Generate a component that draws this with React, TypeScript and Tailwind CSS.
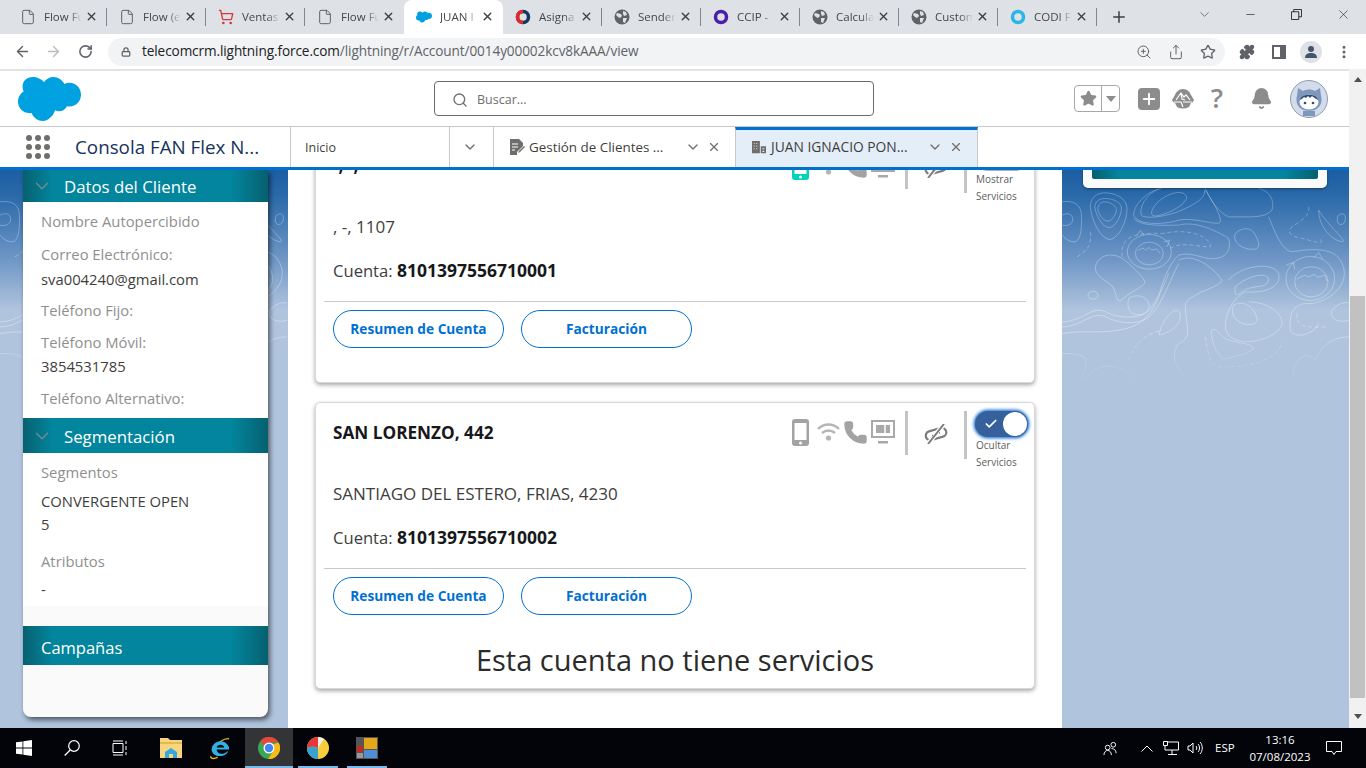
import { ArrowLeft, ArrowRight, RotateCw, Lock, ZoomIn, Share, Star, Puzzle, MoreVertical, X, Plus, ChevronDown, Search, Minus, Check, Phone, Bell, File, ShoppingCart } from "lucide-react";

const sans = "font-['Open_Sans','Liberation_Sans',sans-serif]";

function Globe2() {
  return (
    <svg viewBox="0 0 16 16" className="w-4 h-4">
      <circle cx="8" cy="8" r="7.500" fill="#5f6368" />
      <path d="M3 4l4 1 1 2-2 2-2-1-2-2zM9 2l3 1 1 3-3 1-1-2zM9 9l4 0-2 5-2-1z" fill="#dee1e6" />
    </svg>
  );
}

function Ring({ color, inner }: { color: string; inner?: string }) {
  return (
    <svg viewBox="0 0 16 16" className="w-4 h-4">
      <circle cx="8" cy="8" r="5.500" fill="none" stroke={color} strokeWidth="3.500" />
      {inner && <path d="M8 13.500A5.500 5.500 0 0 1 8 2.500" fill="none" stroke={inner} strokeWidth="3.500" />}
    </svg>
  );
}

function Cloud({ className }: { className: string }) {
  return (
    <svg viewBox="0 0 63 44" className={className}>
      <path
        fill="#00a1e0"
        d="M26 5.200C28.100 2 31.600 0 35.500 0c4.700 0 8.800 2.900 10.900 6.900C47.900 6.100 49.700 5.700 51.500 5.700 58 5.700 63 11 63 17.600S58 29.500 51.500 29.500c-.9 0-1.700-.1-2.500-.3-1.500 3-4.500 5-8 5-1.400 0-2.700-.3-3.900-.9C35.600 38 30.900 44 24.900 44c-5.100 0-9.500-3.400-11.300-8-.7.2-1.500.2-2.300.2C5 36.200 0 31 0 24.600c0-4.300 2.300-8 5.600-10C4.900 13 4.500 11.200 4.500 9.300 4.500 4.200 9 0 14.500 0 18.800 0 23.700 2 26 5.200z"
      />
    </svg>
  );
}

type TabInfo = { title: string; icon: React.ReactNode; active?: boolean };

const docIcon = <File className="w-4 h-4 text-[#5f6368]" strokeWidth={1.500} />;

const browserTabs: TabInfo[] = [
  { title: "Flow Fu", icon: docIcon },
  { title: "Flow (e", icon: docIcon },
  { title: "Ventas", icon: <ShoppingCart className="w-4 h-4 text-[#d8383a]" strokeWidth={2} /> },
  { title: "Flow Fu", icon: docIcon },
  { title: "JUAN I", icon: <Cloud className="w-4 h-3" />, active: true },
  { title: "Asigna", icon: <Ring color="#12395f" inner="#e8262a" /> },
  { title: "Sender", icon: <Globe2 /> },
  { title: "CCIP -", icon: <Ring color="#4b1fa8" /> },
  { title: "Calcula", icon: <Globe2 /> },
  { title: "Custom", icon: <Globe2 /> },
  { title: "CODI F", icon: <Ring color="#29b6e6" /> },
];

function BrowserChrome() {
  return (
    <div className={`${sans} shrink-0`}>
      <div className="h-[34px] bg-[#dee1e6] flex items-end pl-2">
        {browserTabs.map((t, i) => (
          <div
            key={i}
            className={`relative w-[99px] h-[34px] flex items-center pl-[12px] pb-[1px] ${t.active ? "bg-white rounded-t-lg" : ""}`}
          >
            <span className="w-4 flex justify-center shrink-0">{t.icon}</span>
            <span className="ml-[8px] w-[38px] text-[11.500px] text-[#45474a] whitespace-nowrap overflow-hidden [mask-image:linear-gradient(90deg,#000_65%,transparent)]">{t.title}</span>
            <X className="ml-[3px] w-[13px] h-[13px] text-[#3c4043] shrink-0" strokeWidth={2.500} />
            {!t.active && i !== 3 && <span className="absolute right-0 top-[8px] h-[18px] w-px bg-[#80868b]" />}
          </div>
        ))}
        <Plus className="ml-[13px] mb-[8px] w-[18px] h-[18px] text-[#3c4043]" strokeWidth={2} />
        <div className="ml-auto flex items-center h-full pb-[6px]">
          <ChevronDown className="w-[15px] h-[15px] text-[#3c4043] mr-[32px]" strokeWidth={1} />
          <Minus className="w-[13px] h-[13px] text-[#202124] mr-[34px]" strokeWidth={1.200} />
          <svg viewBox="0 0 12 12" className="w-[11px] h-[11px] mr-[34px]" fill="none" stroke="#202124">
            <path d="M.5 3h8v8.500h-8zM3 3V.5h8.500v8H8.500" />
          </svg>
          <X className="w-[15px] h-[15px] text-[#202124] mr-[15px]" strokeWidth={1} />
        </div>
      </div>
      <div className="h-[35px] bg-white flex items-center">
        <ArrowLeft className="ml-[14px] w-[17px] h-[17px] text-[#5f6368]" strokeWidth={2} />
        <ArrowRight className="ml-[14px] w-[17px] h-[17px] text-[#babcbe]" strokeWidth={2} />
        <RotateCw className="ml-[16px] w-[15px] h-[15px] text-[#5f6368]" strokeWidth={2.500} />
        <div className="ml-[15px] w-[1117px] h-[28px] rounded-full bg-[#f1f3f4] flex items-center pl-[13px]">
          <Lock className="w-[10px] h-[12px] text-[#5f6368]" strokeWidth={3} />
          <span className="ml-[11px] text-[13.600px] text-[#202124] tracking-[-0.1px]">telecomcrm.lightning.force.com<span className="text-[#5f6368]">/lightning/r/Account/0014y00002kcv8kAAA/view</span></span>
          <ZoomIn className="ml-auto w-4 h-4 text-[#5f6368]" strokeWidth={1.500} />
          <Share className="ml-[16px] w-4 h-4 text-[#5f6368]" strokeWidth={1.500} />
          <Star className="ml-[16px] mr-[9px] w-4 h-4 text-[#5f6368]" strokeWidth={2} />
        </div>
        <Puzzle className="ml-[14px] w-4 h-4 text-[#5f6368] fill-[#5f6368]" />
        <svg viewBox="0 0 14 14" className="ml-[17px] w-[14px] h-[14px]"><path d="M0 0h14v14H0zM2 2v10h6V2z" fill="#5f6368" fillRule="evenodd" /></svg>
        <span className="ml-[14px] w-[22px] h-[22px] rounded-full bg-[#dee1e6] flex items-center justify-center">
          <svg viewBox="0 0 14 14" className="w-[14px] h-[14px]"><circle cx="7" cy="4" r="3" fill="#44546a" /><path d="M1 13c0-4 3-5 6-5s6 1 6 5z" fill="#44546a" /></svg>
        </span>
        <MoreVertical className="ml-[14px] w-4 h-4 text-[#5f6368]" strokeWidth={2.500} />
      </div>
    </div>
  );
}

function SfHeader() {
  return (
    <div className="h-[58px] bg-white border-t-2 border-[#e3e3e3] border-b border-b-[#c9c9c9] flex items-center pl-[18px] relative">
      <Cloud className="w-[63px] h-[44px] shrink-0" />
      <div className="ml-[353px] w-[440px] h-[35px] border border-[#6b6b6b] rounded-[4px] flex items-center pl-[17px] pt-[3px] shrink-0">
        <Search className="w-[16px] h-[16px] text-[#706e6b]" strokeWidth={2} />
        <span className="ml-[9px] text-[12.500px] text-[#706e6b]">Buscar...</span>
      </div>
      <div className="ml-[200px] flex items-center w-[46px] h-[27px] border border-[#a8a8a8] rounded-[4px] shrink-0">
        <span className="w-[27px] h-full flex items-center justify-center border-r border-[#a8a8a8]">
          <Star className="w-[17px] h-[17px] text-[#8c8c8c] fill-[#8c8c8c]" />
        </span>
        <span className="flex-1 flex justify-center"><span className="w-0 h-0 border-x-[5px] border-x-transparent border-t-[6px] border-t-[#8c8c8c]" /></span>
      </div>
      <span className="ml-[18px] w-[22px] h-[22px] rounded-[4px] bg-[#8c8c8c] flex items-center justify-center shrink-0">
        <Plus className="w-[18px] h-[18px] text-white" strokeWidth={2.500} />
      </span>
      <svg viewBox="0 0 22 20" className="ml-[12px] w-[22px] h-[20px] shrink-0">
        <path d="M11 0c4 0 7 3 8 6l3 5c-1 2-2 3-3 3l-2 4c-4 2-8 2-12 0l-2-4c-1 0-2-1-3-3l3-5c1-3 4-6 8-6z" fill="#8c8c8c" />
        <path d="M4 11l5-7 3 4 2-2 4 5M9 4l1 6 3 1M2 13h7l2 5M11 13l9 0" fill="none" stroke="#fff" strokeWidth="1.200" />
      </svg>
      <span className="ml-[15px] -mt-[2px] w-[16px] text-center text-[27px] leading-none font-semibold text-[#8c8c8c] shrink-0">?</span>
      <Bell className="ml-[25px] w-[23px] h-[23px] text-[#8c8c8c] fill-[#8c8c8c] shrink-0" />
      <svg viewBox="0 0 38 38" className="ml-[17px] w-[38px] h-[38px] shrink-0">
        <circle cx="19" cy="19" r="18.500" fill="#d3dcea" stroke="#8f9bb0" />
        <path d="M8 8l5 3c3-2 9-2 12 0l5-3 1 8c2 6-1 15-12 15S5 22 7 16z" fill="#7f97bd" />
        <ellipse cx="19" cy="22" rx="9.500" ry="7.500" fill="#fff" />
        <path d="M10 20c1-7 17-7 18 0-3-2-5-3-6-4l-2 2-2-2-2 2-2-1c-1 1-2 2-4 3z" fill="#2f4a7c" />
        <circle cx="15" cy="23" r="1.300" fill="#2f4a7c" /><circle cx="23" cy="23" r="1.300" fill="#2f4a7c" />
        <path d="M13 31h12v5H13z" fill="#7f97bd" />
      </svg>
    </div>
  );
}

function SfNav() {
  return (
    <div className="h-[40px] bg-white flex items-stretch text-[#3e3e3c]">
      <div className="w-[290px] flex items-center pl-[26px] shrink-0">
        <div className="grid grid-cols-3 gap-[3px]">
          {Array.from({ length: 9 }).map((_, i) => (
            <span key={i} className="w-[6px] h-[6px] rounded-full bg-[#706e6b]" />
          ))}
        </div>
        <span className="ml-[25px] text-[18.800px] text-[#16325c] whitespace-nowrap">Consola FAN Flex N...</span>
      </div>
      <div className="w-[159px] border-l border-[#c9c9c9] flex items-center pl-[14px] pt-[2px] text-[12.500px] text-[#3e3e3c] shrink-0">Inicio</div>
      <div className="w-[44px] border-l border-[#c9c9c9] flex items-center justify-center pr-[3px] shrink-0">
        <ChevronDown className="w-[16px] h-[16px] text-[#706e6b]" strokeWidth={2} />
      </div>
      <div className="w-[242px] border-l border-[#c9c9c9] flex items-center pl-[15px] shrink-0">
        <svg viewBox="0 0 16 16" className="w-[16px] h-[16px] shrink-0">
          <path d="M1 0h9l4 4v3L8 13v3H1z" fill="#706e6b" />
          <path d="M3 5h6M3 8h6M3 11h3" stroke="#fff" strokeWidth="1.200" />
          <path d="M10 12l5-5 1 1-5 5-2 1z" fill="#706e6b" />
        </svg>
        <span className="ml-[4px] w-[150px] text-[13.400px] whitespace-nowrap">Gestión de Clientes ...</span>
        <ChevronDown className="ml-[6px] w-[16px] h-[16px] text-[#706e6b]" strokeWidth={2} />
        <X className="ml-[6px] w-[14px] h-[14px] text-[#706e6b]" strokeWidth={2} />
      </div>
      <div className="w-[243px] bg-[#e4eef8] border-t-[3px] border-t-[#0070d2] border-x border-x-[#c9c9c9] flex items-center pl-[15px] pb-[3px] shrink-0">
        <svg viewBox="0 0 16 16" className="w-[16px] h-[14px] shrink-0">
          <path d="M0 1h9v14H0zM10 7h6v8h-6z" fill="#706e6b" />
          <path d="M2 4h1M5 4h1M2 7h1M5 7h1M2 10h1M5 10h1M12 10h2M12 13h2" stroke="#e4eef8" strokeWidth="1.300" />
        </svg>
        <span className="ml-[4px] w-[151px] text-[13.800px] whitespace-nowrap">JUAN IGNACIO PON...</span>
        <ChevronDown className="ml-[5px] w-[16px] h-[16px] text-[#706e6b]" strokeWidth={2} />
        <X className="ml-[6px] w-[14px] h-[14px] text-[#706e6b]" strokeWidth={2} />
      </div>
    </div>
  );
}

function SectionHeader({ title, height, chevron = true }: { title: string; height: string; chevron?: boolean }) {
  return (
    <div className={`${height} shrink-0 flex items-center bg-[linear-gradient(90deg,#06606f_0%,#03859d_12%,#03859d_85%,#06606f_100%)] text-white`}>
      {chevron ? (
        <>
          <ChevronDown className="ml-[8px] w-[22px] h-[22px] text-[#6f8c93]" strokeWidth={1.500} />
          <span className="ml-[11px] pt-[2px] text-[16.800px]">{title}</span>
        </>
      ) : (
        <span className="ml-[18px] pt-[5px] text-[16.500px]">{title}</span>
      )}
    </div>
  );
}

function Label({ children, className }: { children: React.ReactNode; className: string }) {
  return <div className={`text-[14.800px] leading-[20px] text-[#8f8f8f] ${className}`}>{children}</div>;
}

function Value({ children, className }: { children: React.ReactNode; className: string }) {
  return <div className={`text-[14.800px] leading-[20px] text-[#3e3e3c] ${className}`}>{children}</div>;
}

function Sidebar() {
  return (
    <div className="relative w-[245px] h-[547px] bg-[#fafafa] rounded-b-lg shadow-[2px_3px_5px_rgba(0,0,0,0.55)] flex flex-col overflow-hidden">
      <SectionHeader title="Datos del Cliente" height="h-[32px]" />
      <div className="bg-white h-[216px] pl-[18px] pt-[9px]">
        <Label className="">Nombre Autopercibido</Label>
        <Label className="mt-[13px]">Correo Electrónico:</Label>
        <Value className="mt-[5px]">sva004240@gmail.com</Value>
        <Label className="mt-[11px]">Teléfono Fijo:</Label>
        <Label className="mt-[12px]">Teléfono Móvil:</Label>
        <Value className="mt-[4px]">3854531785</Value>
        <Label className="mt-[12px]">Teléfono Alternativo:</Label>
      </div>
      <SectionHeader title="Segmentación" height="h-[35px]" />
      <div className="bg-white h-[153px] pl-[18px] pt-[9px]">
        <Label className="">Segmentos</Label>
        <Value className="mt-[9px]">CONVERGENTE OPEN</Value>
        <Value className="mt-[3px]">5</Value>
        <Label className="mt-[17px]">Atributos</Label>
        <Value className="mt-[8px]">-</Value>
      </div>
      <div className="h-[20px] shrink-0" />
      <SectionHeader title="Campañas" height="h-[39px]" chevron={false} />
    </div>
  );
}

function LinkOff() {
  return (
    <svg viewBox="0 0 24 20" className="w-[24px] h-[20px]" fill="none">
      <rect x="1.500" y="5.500" width="21" height="9" rx="4.500" stroke="#7c7c7c" strokeWidth="2.200" transform="rotate(-16 12 10)" />
      <path d="M4 20L20 0" stroke="#fff" strokeWidth="4.500" />
      <path d="M4 20L20 0" stroke="#7c7c7c" strokeWidth="2" />
      <path d="M8 11.500l1 0M15 9l1 0" stroke="#7c7c7c" strokeWidth="1.500" />
    </svg>
  );
}

function CardIcons({ on }: { on: boolean }) {
  return (
    <div className="absolute right-[6px] top-[8px] flex items-start">
      <svg viewBox="0 0 17 27" className="mt-[8px] w-[17px] h-[27px]">
        <path d="M3 0h11a3 3 0 0 1 3 3v21a3 3 0 0 1-3 3H3a3 3 0 0 1-3-3V3a3 3 0 0 1 3-3zM2.500 4v17h12V4z" fill={on ? "#a3a3a3" : "#00d2be"} fillRule="evenodd" />
        <circle cx="8.500" cy="24" r="1.500" fill="#fff" />
      </svg>
      <svg viewBox="0 0 23 19" className="ml-[8px] mt-[11px] w-[23px] h-[19px]" fill="none" stroke="#b5b5b5" strokeWidth="2.400">
        <path d="M1 7c6-6 15-6 21 0M5 11c4-3 9-3 13 0" />
        <circle cx="11.500" cy="16" r="2.600" fill="#b5b5b5" stroke="none" />
      </svg>
      <Phone className="ml-[3px] mt-[9px] w-[25px] h-[25px] text-[#a3a3a3] fill-[#a3a3a3]" strokeWidth={1.500} />
      <svg viewBox="0 0 24 24" className="ml-[3px] mt-[9px] w-[24px] h-[24px]">
        <path d="M1 1h22v16H1z" fill="none" stroke="#a9a9a9" strokeWidth="2" />
        <path d="M5 5h14v8H5zM7 21h10v2.500H7z" fill="#a9a9a9" />
        <path d="M14 5v8" stroke="#fff" strokeWidth="1.500" />
      </svg>
      <span className="ml-[10px] w-[3px] h-[44px] bg-[#c4c4c4]" />
      <span className="ml-[16px] mt-[13px] flex"><LinkOff /></span>
      <span className="ml-[16px] w-[3px] h-[48px] bg-[#c4c4c4]" />
      <div className="ml-[8px] w-[53px] flex flex-col">
        <div className={`w-[53px] h-[26px] rounded-full flex items-center justify-between pr-[1px] ${on ? "bg-[#35609c] shadow-[0_0_3px_1.500px_#2f7fd6]" : "bg-[#b0b0b0]"}`}>
          <Check className="ml-[9px] w-[14px] h-[14px] text-white" strokeWidth={3} />
          <span className="w-[24px] h-[24px] rounded-full bg-white" />
        </div>
        <span className="ml-[1px] text-[10px] leading-[17px] text-[#5c5c5c]">{on ? "Ocultar" : "Mostrar"}<br />Servicios</span>
      </div>
    </div>
  );
}

function AccountCard({ title, address, account, on, className, titleTop, children }: { title: string; address: string; account: string; on: boolean; className: string; titleTop: string; children?: React.ReactNode }) {
  return (
    <div className={`relative w-[720px] bg-white border border-[#d8d8d8] rounded-[5px] shadow-[0_2px_4px_rgba(0,0,0,0.35)] shrink-0 ${className}`}>
      <CardIcons on={on} />
      <div className={`pl-[17px] ${titleTop} text-[17.200px] leading-[24px] font-bold text-[#16181a]`}>{title}</div>
      <div className="pl-[17px] mt-[38px] text-[17px] leading-[22px] text-[#3e3e3c]">{address}</div>
      <div className="pl-[17px] mt-[21px] text-[16.600px] leading-[22px] text-[#3e3e3c]">Cuenta: <span className="text-[17.500px] font-bold text-[#16181a]">{account}</span></div>
      <div className="mx-[8px] mt-[19px] border-t border-[#c9c9c9]" />
      <div className="pl-[17px] mt-[8px] flex gap-[17px]">
        <button className="w-[171px] h-[38px] rounded-full border border-[#0070d2] text-[#0070d2] text-[13.700px] font-bold">Resumen de Cuenta</button>
        <button className="w-[171px] h-[38px] rounded-full border border-[#0070d2] text-[#0070d2] text-[13.700px] font-bold">Facturación</button>
      </div>
      {children}
    </div>
  );
}

const contourLines = [
  "M130 68C100 68 85 85 85 110C90 160 120 208 145 208C175 200 195 150 195 115C195 85 160 68 130 68z",
  "M130 85C105 85 95 100 100 120C110 155 130 175 145 172C165 165 180 130 178 110C175 95 150 85 130 85z",
  "M128 95c-15 0-22 12-20 25c5 20 22 38 35 32c12-8 22-25 20-35c-2-12-20-22-35-22z",
  "M0 95C30 90 55 100 58 130C60 170 58 215 35 215C15 215 0 195 0 195",
  "M0 135c15-8 32-5 32 12c0 15-15 22-32 18",
  "M340 68c-30 5-70 35-72 62c5 10 15 8 30 4c30-8 70-30 76-50c0-15-20-20-34-16z",
  "M300 55C260 60 215 100 215 135C225 165 300 165 350 150C400 140 470 170 475 155C480 140 450 90 430 60",
  "M290 57C255 70 230 110 238 135C250 148 320 140 370 115C400 100 430 85 428 60",
  "M430 55C450 100 475 130 500 140C560 140 610 145 630 120C640 90 620 60 590 55",
  "M215 145C240 170 300 165 350 165C400 150 470 185 500 205C510 240 490 270 440 265C410 260 380 245 350 255C320 280 300 340 290 380C270 430 240 470 170 480C110 490 60 480 0 490",
  "M350 270C400 245 460 300 480 330C470 355 400 360 370 400C370 470 395 500 350 520C330 550 330 580 370 620",
  "M520 190c20-20 50-20 60 5c15 25 15 45-10 42c-30 0-60-20-50-47z",
  "M620 140C640 190 660 240 690 245C750 235 820 230 840 280C870 340 800 400 740 400C700 400 680 420 685 480C700 510 760 490 770 460",
  "M100 290c10-40 60-50 100-10c30 30 50 45 48 60c-15 15-50 30-70 50c-15 10-15-20-25-40c-20-20-55-30-53-60z",
  "M500 330c30-40 130-60 150-20c10 40-40 60-100 55c-40 20-60 70-60 100c0 80 150 50 170 0c5-40-50-70-100-70",
  "M520 350c30-30 100-50 100-20c-10 30-50 10-80 35c-15 15-25 10-20-15z",
  "M515 405c25-15 60 0 70 40c5 25-50 25-70-5c-5-15-5-25 0-35z",
  "M0 470C60 470 90 420 130 440C170 460 240 470 270 430C300 400 320 340 350 280",
  "M0 455C60 455 90 405 130 425C170 445 240 450 265 415C285 390 300 360 320 310",
  "M450 480c-10 20 20 90 40 85c30-5 70-15 85-30c-10-20-60-15-85-30c-15-10-30-35-40-25z",
  "M200 385c20-15 60-10 62 25c-5 30-50 30-60 10c-5-10-5-25-2-35z",
  "M292 495c0-30 40-90 60-70c10 20-5 55-60 70z",
  "M690 620C700 560 730 540 760 570C780 520 820 500 861 500",
  "M0 550c20 0 70 0 72 20c0 30-10 60-30 60M60 640C100 570 170 570 230 640",
  "M770 120C800 170 860 215 840 215C810 210 770 170 770 120z",
  "M830 135c15-10 25 0 18 20c-5 12-20 10-22-2c0-8 0-14 4-18z",
  "M78 375a15 12 0 1 0 30 0a15 12 0 1 0-30 0z",
  "M810 420c20-25 50-25 51-20M810 420c-10 25 20 40 51 30",
];

const contourDashes = [
  "M180 260C175 210 200 185 300 190C400 170 450 210 445 230C400 230 350 210 320 240",
  "M740 110C750 160 640 170 700 200C750 210 790 230 775 205",
  "M200 570C220 510 260 490 300 480M430 500C440 570 450 600 500 590C560 590 650 570 660 515",
  "M45 260C80 240 90 220 85 180M705 430C700 480 750 470 800 470",
];

// decorative topographic lines of the page background, drawn from the crop at 3x
function Contours({ id }: { id: string }) {
  return (
    <svg viewBox="0 0 861 650" className="absolute left-0 top-0 w-[287px] h-[217px]" fill="none" strokeWidth="2.500">
      <defs>
        <linearGradient id={id} gradientUnits="userSpaceOnUse" x1="0" y1="0" x2="0" y2="650">
          <stop offset="0" stopColor="#fff" stopOpacity="0.3" />
          <stop offset="0.75" stopColor="#fff" stopOpacity="0.4" />
          <stop offset="1" stopColor="#fff" stopOpacity="0" />
        </linearGradient>
      </defs>
      <g stroke={`url(#${id})`}>
        {contourLines.map((d, i) => (
          <path key={i} d={d} />
        ))}
        {contourDashes.map((d, i) => (
          <path key={i} d={d} strokeDasharray="12 8" />
        ))}
        <ellipse cx="262" cy="245" rx="66" ry="52" />
        <ellipse cx="262" cy="250" rx="42" ry="34" />
        <path d="M228 240l15-6 8 6 10-8 8 8 15-4 10 14M225 195l10-14 12 14M305 215l18-5-8 20" />
        <ellipse cx="745" cy="325" rx="73" ry="66" />
        <ellipse cx="748" cy="335" rx="50" ry="45" />
        <path d="M705 325l25-10 8 6 18-8 12 8 20-6 8 18M672 285l22-8 4 20M755 262l15-14 12 18" />
      </g>
    </svg>
  );
}

function Workspace() {
  return (
    <div className="relative flex-1 min-h-0 border-t-[3px] border-[#0070d2] overflow-hidden bg-[linear-gradient(180deg,#1b5ea3_0px,#2a69a9_25px,#7097c6_90px,#b0c4de_140px)] flex">
      <div className="relative w-[288px] pl-[23px] shrink-0">
        <Contours id="contour-left" />
        <Sidebar />
      </div>
      <div className="relative w-[774px] bg-white pl-[27px] flex flex-col shrink-0">
        <AccountCard title="-, -," address=", -, 1107" account="8101397556710001" on={false} titleTop="pt-[17px]" className="-mt-[34px] h-[247px]" />
        <AccountCard title="SAN LORENZO, 442" address="SANTIAGO DEL ESTERO, FRIAS, 4230" account="8101397556710002" on titleTop="pt-[18px]" className="mt-[19px] h-[287px]">
          <div className="mt-[26px] text-center text-[29px] leading-[38px] text-[#2b2b2b]">Esta cuenta no tiene servicios</div>
        </AccountCard>
      </div>
      <div className="relative pl-[21px] shrink-0">
        <Contours id="contour-right" />
        <div className="relative w-[244px] h-[50px] -mt-[32px] bg-[#fafafa] rounded-[5px] shadow-[0_1px_3px_rgba(0,0,0,0.4)] px-[9px] pb-[9px] flex">
          <div className="flex-1 rounded-b-[2px] bg-[linear-gradient(90deg,#06606f_0%,#03859d_12%,#03859d_85%,#06606f_100%)] self-stretch" />
        </div>
      </div>
    </div>
  );
}

function Scrollbar() {
  return (
    <div className="w-[17px] shrink-0 bg-[#f1f1f1] flex flex-col items-center">
      <span className="mt-[8px] w-0 h-0 border-x-[4px] border-x-transparent border-b-[5px] border-b-[#505050]" />
      <div className="mt-[214px] w-[15px] h-[402px] bg-[#c1c1c1]" />
      <span className="mt-[16px] w-0 h-0 border-x-[4px] border-x-transparent border-t-[5px] border-t-[#505050]" />
    </div>
  );
}

function TaskApp({ children, active, running, className }: { children: React.ReactNode; active?: boolean; running?: boolean; className: string }) {
  return (
    <div className={`relative h-full w-[48px] flex items-center justify-center shrink-0 ${active ? "bg-[#333436]" : ""} ${className}`}>
      {children}
      {running && <span className={`absolute bottom-0 h-[2px] bg-[#76b9ed] ${active ? "inset-x-0" : "inset-x-[4px]"}`} />}
    </div>
  );
}

function Taskbar() {
  return (
    <div className="h-[40px] shrink-0 bg-[#02040a] flex items-center text-white font-['Open_Sans',sans-serif]">
      <TaskApp className="">
        <svg viewBox="0 0 16 16" className="w-4 h-4"><path d="M0 2.300l6.500-.9v6.200H0zM7.300 1.300L16 0v7.600H7.300zM0 8.400h6.500v6.200L0 13.700zM7.300 8.400H16V16l-8.700-1.200z" fill="#fff" /></svg>
      </TaskApp>
      <TaskApp className="">
        <svg viewBox="0 0 16 16" className="w-4 h-4" fill="none" stroke="#fff" strokeWidth="1.200"><circle cx="10" cy="6" r="5.300" /><path d="M6.200 10L.7 15.500" /></svg>
      </TaskApp>
      <TaskApp className="">
        <svg viewBox="0 0 16 16" className="w-4 h-4" fill="none" stroke="#fff"><path d="M1 3.500h10v9H1zM1 1h10M1 15h10M14 1v3M14 6v4M14 12v3" /></svg>
      </TaskApp>
      <TaskApp className="ml-[3px]">
        <svg viewBox="0 0 22 20" className="w-[22px] h-[20px]"><path d="M0 0h8l2 2h12v18H0z" fill="#f6d77f" /><path d="M0 4h22v2H0z" fill="#e5b94c" /><path d="M5 14l6-4 6 4v6H5z" fill="#3aa6de" /><path d="M9 16h4v4H9z" fill="#f6d77f" /></svg>
      </TaskApp>
      <TaskApp className="ml-[1px]">
        <svg viewBox="0 0 24 24" className="w-[23px] h-[23px]">
          <path d="M21 2C17 .5 8 6 3 14" fill="none" stroke="#e6b422" strokeWidth="1.500" />
          <path d="M3 12a9 8 0 0 1 18 1H8c0 5 7 6 11 2l1 0c-3 7-18 7-17-3zm5-1h8c-1-4-7-4-8 0z" fill="#2fb1e8" />
          <path d="M2 20c-1 3 4 3 7 1" fill="none" stroke="#e6b422" strokeWidth="1.500" />
        </svg>
      </TaskApp>
      <TaskApp active running className="ml-[1px]">
        <svg viewBox="0 0 22 22" className="w-[22px] h-[22px]">
          <circle cx="11" cy="11" r="11" fill="#3aa757" />
          <path d="M11 0a11 11 0 0 1 9.500 5.500H11a5.500 5.500 0 0 0-5 3.200L2.300 4A11 11 0 0 1 11 0z" fill="#e8453c" />
          <path d="M20.500 5.500A11 11 0 0 1 10 22l4.800-7A5.500 5.500 0 0 0 15 7.500z" fill="#f9bc15" />
          <circle cx="11" cy="11" r="5.500" fill="#fff" /><circle cx="11" cy="11" r="4.200" fill="#4285f4" />
        </svg>
      </TaskApp>
      <TaskApp running className="ml-[1px]">
        <svg viewBox="0 0 22 22" className="w-[22px] h-[22px]">
          <circle cx="11" cy="11" r="11" fill="#f8cf3a" />
          <path d="M11 0A11 11 0 0 0 0 11c4-2 8-1 11 0z" fill="#e8373b" />
          <path d="M0 11a11 11 0 0 0 11 11V11c-3-1-7-2-11 0z" fill="#3aa0d0" />
          <path d="M11 0a11 11 0 0 1 6 2l-6 9z" fill="#f3f2ea" />
        </svg>
      </TaskApp>
      <TaskApp running className="ml-[1px]">
        <svg viewBox="0 0 22 22" className="w-[22px] h-[22px]">
          <path d="M0 0h22v22H0z" fill="#555" />
          <path d="M8 1h13v11H8z" fill="#e3a81a" /><path d="M8 13h13v8H8z" fill="#4f8fd1" />
          <path d="M1 9h6v6H1z" fill="#c8281e" /><path d="M1 16h6v5H1z" fill="#999" />
        </svg>
      </TaskApp>
      <div className="ml-auto flex items-center h-full">
        <svg viewBox="0 0 16 16" className="w-[15px] h-[15px]" fill="none" stroke="#fff"><circle cx="11" cy="4" r="2.500" /><circle cx="5" cy="7" r="2.500" /><path d="M1 15c0-3 2-5 4-5s4 2 4 5M9 8c3 0 5 2 5 5" /></svg>
        <svg viewBox="0 0 12 7" className="ml-[23px] w-[12px] h-[7px]" fill="none" stroke="#fff"><path d="M.5 6.500L6 1l5.500 5.500" /></svg>
        <svg viewBox="0 0 16 14" className="ml-[10px] w-[16px] h-[14px]" fill="none" stroke="#fff"><path d="M4 1h11.500v8H4M0.500 .5h4v4h-4zM2 5v4h2M9 9v4M5 13.500h9" /></svg>
        <svg viewBox="0 0 16 14" className="ml-[8px] w-[16px] h-[14px]" fill="none" stroke="#fff"><path d="M1 5h2l3-3v10L3 9H1zM9 5c1 1 1 3 0 4M11 3c2 2 2 6 0 8M13 1c3 3 3 9 0 12" /></svg>
        <span className="ml-[12px] w-[22px] text-[11.500px]">ESP</span>
        <div className="ml-[12px] w-[62px] flex flex-col items-center text-[11.500px] leading-[17px]">
          <span>13:16</span>
          <span>07/08/2023</span>
        </div>
        <svg viewBox="0 0 16 14" className="ml-[15px] mr-[24px] w-[16px] h-[14px]" fill="none" stroke="#fff"><path d="M.5 .5h15v10H10l-2 3-2-3H.5z" /></svg>
      </div>
    </div>
  );
}

export default function App() {
  return (
    <div className={`w-[1366px] h-[768px] flex flex-col overflow-hidden ${sans}`}>
      <BrowserChrome />
      <div className="flex-1 min-h-0 flex">
        <div className="w-[1349px] flex flex-col shrink-0">
          <SfHeader />
          <SfNav />
          <Workspace />
        </div>
        <Scrollbar />
      </div>
      <Taskbar />
    </div>
  );
}
